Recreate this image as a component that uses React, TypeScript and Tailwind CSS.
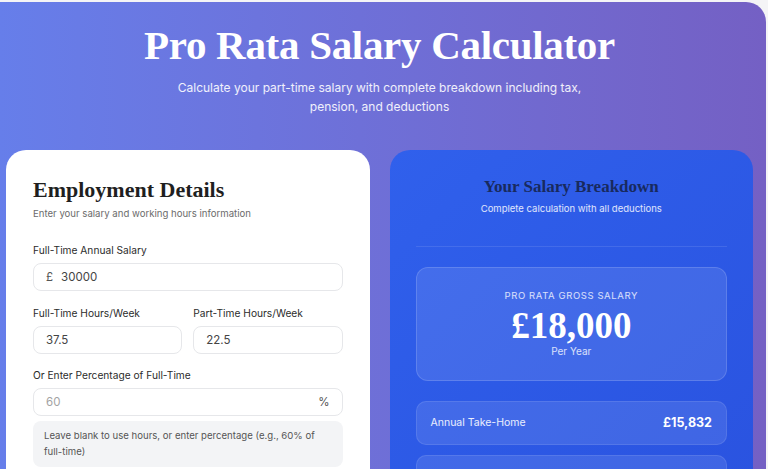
import React from "react"

const serif = { fontFamily: '"Liberation Serif", "DejaVu Serif", serif' }

const Field = ({
    label,
    value,
    prefix,
    suffix,
    muted,
}: {
    label: string
    value: string
    prefix?: string
    suffix?: string
    muted?: boolean
}) => (
    <div className="flex flex-col">
        <label className="text-[10.2px] text-[#2b2b2b] leading-[14px] mb-[6px]">{label}</label>
        <div className="h-[28px] rounded-[8px] border border-[#e6e7ea] bg-white flex items-center px-[12px] text-[11.5px]">
            {prefix && <span className="text-[#555] mr-[8px]">{prefix}</span>}
            <span className={muted ? "text-[#a3a3a3] flex-1" : "text-[#444] flex-1"}>{value}</span>
            {suffix && <span className="text-[#555]">{suffix}</span>}
        </div>
    </div>
)

export default function App() {
    return (
        <div
            className="w-[768px] h-[469px] overflow-hidden bg-[#f4f4f6] pt-[2px] pr-[2px]"
            style={{ fontFamily: '"Inter", "Open Sans", sans-serif' }}
        >
            <div className="h-[480px] rounded-tr-[20px] bg-gradient-to-r from-[#667eea] to-[#7460c4] pl-[6px] pr-[13px]">
                {/* Header */}
                <div className="flex flex-col items-center pt-[19px]">
                    <h1
                        className="text-[41px] font-bold text-white leading-[48px] tracking-[-0.3px]"
                        style={serif}
                    >
                        Pro Rata Salary Calculator
                    </h1>
                    <p className="mt-[9px] max-w-[440px] text-center text-[12px] leading-[19px] text-white/90">
                        Calculate your part-time salary with complete breakdown including tax, pension, and
                        deductions
                    </p>
                </div>

                <div className="grid grid-cols-2 gap-[20px] mt-[34px]">
                    {/* Employment details */}
                    <div className="bg-white rounded-[20px] px-[27px] pt-[26px] h-[340px]">
                        <h2 className="text-[22px] font-bold text-[#1f1f1f] leading-[28px]" style={serif}>
                            Employment Details
                        </h2>
                        <p className="text-[9.6px] text-[#6b6b6b] mt-[3px]">
                            Enter your salary and working hours information
                        </p>
                        <div className="mt-[22px]">
                            <Field label="Full-Time Annual Salary" value="30000" prefix="£" />
                        </div>
                        <div className="grid grid-cols-2 gap-[11px] mt-[15px]">
                            <Field label="Full-Time Hours/Week" value="37.5" />
                            <Field label="Part-Time Hours/Week" value="22.5" />
                        </div>
                        <div className="mt-[14px]">
                            <Field label="Or Enter Percentage of Full-Time" value="60" suffix="%" muted />
                        </div>
                        <div className="mt-[5px] rounded-[8px] bg-[#f3f4f6] pl-[11px] pr-[14px] py-[7px] text-[9.6px] leading-[16px] text-[#555]">
                            Leave blank to use hours, or enter percentage (e.g., 60% of full-time)
                        </div>
                    </div>

                    {/* Breakdown */}
                    <div className="rounded-[20px] bg-gradient-to-br from-[#3060ec] to-[#2a53e0] px-[26px] pt-[26px] h-[340px]">
                        <div className="flex flex-col items-center">
                            <h2 className="text-[17px] font-bold text-[#182a5e] leading-[22px]" style={serif}>
                                Your Salary Breakdown
                            </h2>
                            <p className="text-[9.5px] text-white/85 mt-[4px]">
                                Complete calculation with all deductions
                            </p>
                        </div>
                        <div className="h-px bg-white/10 mt-[30px]" />
                        <div className="mt-[20px] rounded-[12px] bg-white/10 border border-white/15 h-[114px] flex flex-col items-center pt-[21px]">
                            <span className="text-[9.5px] tracking-[0.6px] text-white/80">PRO RATA GROSS SALARY</span>
                            <span className="text-[37px] font-bold text-white leading-[38px] mt-[3px]" style={serif}>
                                £18,000
                            </span>
                            <span className="text-[10px] text-white/80 leading-[12px]">Per Year</span>
                        </div>
                        <div className="mt-[20px] rounded-[10px] bg-white/10 border border-white/10 h-[44px] flex items-center justify-between px-[14px]">
                            <span className="text-[10.5px] text-white/90">Annual Take-Home</span>
                            <span className="text-[12.5px] font-bold text-white">£15,832</span>
                        </div>
                        <div className="mt-[10px] rounded-[10px] bg-white/10 border border-white/10 h-[44px]" />
                    </div>
                </div>
            </div>
        </div>
    )
}
